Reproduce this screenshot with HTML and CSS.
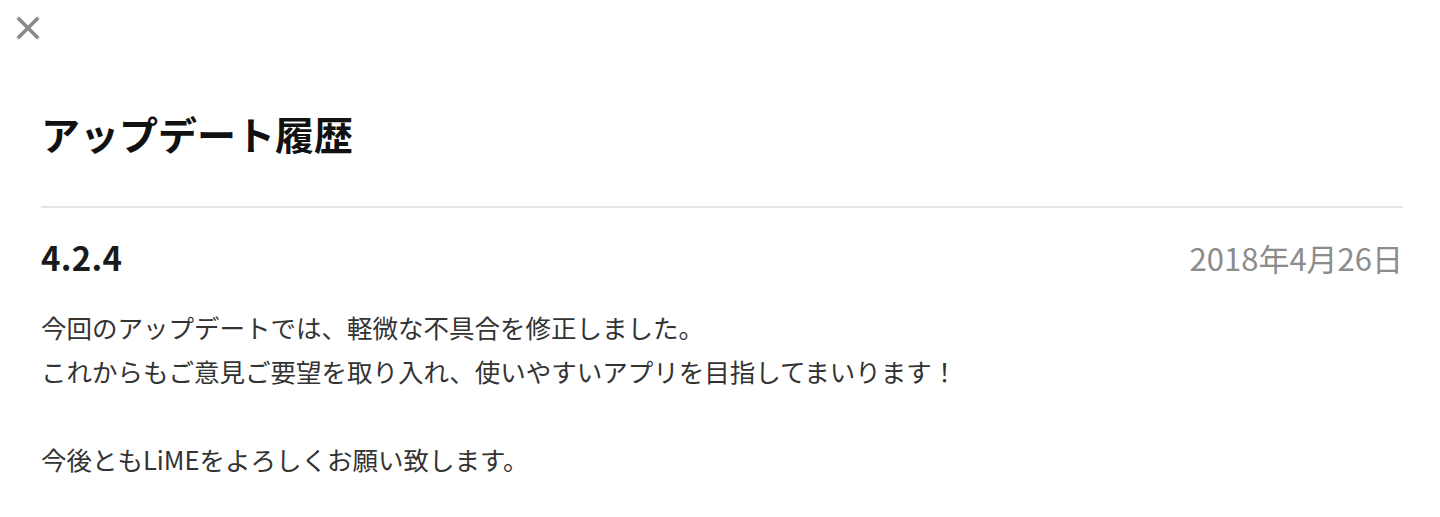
FILE: index.html
```
<!DOCTYPE html>
<html lang="ja">
<head>
<meta charset="utf-8">
<title>アップデート履歴</title>
<link rel="stylesheet" href="styles.css">
</head>
<body>
<div class="page">
  <header class="topbar">
    <button class="close" aria-label="閉じる">
      <svg viewBox="0 0 24 24" width="24" height="24" aria-hidden="true">
        <path d="M3 3 L21 21 M21 3 L3 21" stroke="#8a8a8a" stroke-width="3.6" stroke-linecap="square" fill="none"/>
      </svg>
    </button>
  </header>
  <main class="content">
    <h1 class="title">アップデート履歴</h1>
    <section class="release">
      <div class="release-head">
        <span class="version">4.2.4</span>
        <span class="date">2018年4月26日</span>
      </div>
      <div class="notes">
        <p>今回のアップデートでは、軽微な不具合を修正しました。</p>
        <p>これからもご意見ご要望を取り入れ、使いやすいアプリを目指してまいります！</p>
        <p class="blank">&nbsp;</p>
        <p>今後ともLiMEをよろしくお願い致します。</p>
      </div>
    </section>
  </main>
</div>
</body>
</html>
```
FILE: styles.css
```
html, body {
  margin: 0;
  padding: 0;
  background: #ffffff;
}

body {
  font-family: "Noto Sans CJK JP", "Noto Sans", sans-serif;
  color: #222222;
}

.page {
  width: 1440px;
  height: 517px;
  overflow: hidden;
}

.topbar {
  padding: 16px 0 0 16px;
  height: 24px;
}

.close {
  display: block;
  width: 24px;
  height: 24px;
  padding: 0;
  margin: 0;
  border: 0;
  background: none;
  cursor: pointer;
}

.close svg {
  display: block;
}

.content {
  padding: 0 37px 0 41px;
}

.title {
  margin: 65px 0 0 0;
  font-size: 39px;
  line-height: 56px;
  font-weight: 700;
  color: #111111;
  padding-bottom: 45px;
  border-bottom: 2px solid #e4e4e4;
}

.release-head {
  display: flex;
  justify-content: space-between;
  align-items: baseline;
  margin-top: 29px;
  line-height: 40px;
}

.version {
  font-size: 33px;
  font-weight: 700;
  color: #1a1a1a;
  letter-spacing: 0.3px;
}

.date {
  font-size: 31px;
  color: #8c8c8c;
}

.notes {
  margin-top: 27px;
}

.notes p {
  margin: 0;
  font-size: 25.5px;
  line-height: 44px;
  color: #333333;
}
```
